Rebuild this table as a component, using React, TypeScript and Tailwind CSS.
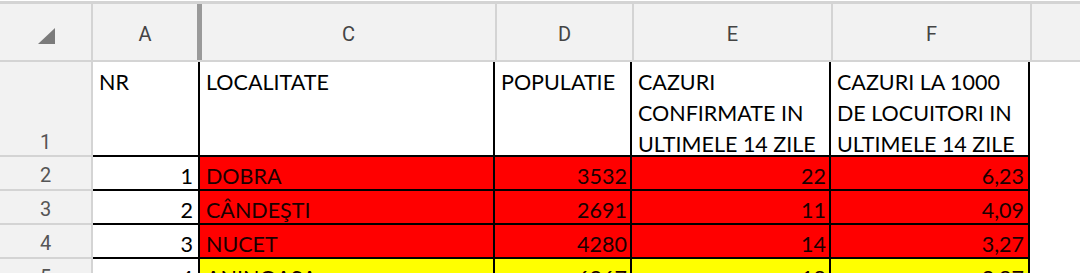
const cols = {
  a: "w-[107px]",
  c: "w-[295px]",
  d: "w-[137px]",
  e: "w-[199px]",
  f: "w-[199px]",
};

interface Row {
  n: number;
  nr: string;
  loc: string;
  pop: string;
  cases: string;
  rate: string;
  fill: string;
}

const rows: Row[] = [
  { n: 2, nr: "1", loc: "DOBRA", pop: "3532", cases: "22", rate: "6,23", fill: "bg-[#ff0000]" },
  { n: 3, nr: "2", loc: "CÂNDEŞTI", pop: "2691", cases: "11", rate: "4,09", fill: "bg-[#ff0000]" },
  { n: 4, nr: "3", loc: "NUCET", pop: "4280", cases: "14", rate: "3,27", fill: "bg-[#ff0000]" },
  { n: 5, nr: "4", loc: "ANINOASA", pop: "6267", cases: "18", rate: "2,87", fill: "bg-[#ffff00]" },
];

const hdrFont = "font-['Roboto',sans-serif] text-[20px] leading-[24px]";

function ColHead({ label, w, thick }: { label: string; w: string; thick?: boolean }) {
  return (
    <div
      className={`${w} shrink-0 flex items-center justify-center pt-[3px] text-[#444444] ${hdrFont} ${
        thick ? "border-r-[5px] border-[#9a9a9a]" : "border-r-2 border-[#d4d4d4]"
      }`}
    >
      {label}
    </div>
  );
}

function HeadCell({ w, lines }: { w: string; lines: string[] }) {
  return (
    <div className={`${w} shrink-0 overflow-hidden bg-white border-r-2 border-b-2 border-black pl-[6px] pt-[5px] leading-[31px]`}>
      {lines.map((l) => (
        <div key={l} className="whitespace-nowrap">
          {l}
        </div>
      ))}
    </div>
  );
}

export default function App() {
  return (
    <div className="w-[1080px] h-[273px] overflow-hidden bg-white font-['Lato',sans-serif] text-[21.5px] text-black">
      <div className="h-px bg-white" />
      {/* column letters */}
      <div className="flex h-[61px] bg-[#f2f2f2] border-t-[3px] border-b-2 border-[#d4d4d4]">
        <div className="w-[93px] shrink-0 border-r-2 border-[#d4d4d4] pl-[38px] pt-[24px]">
          <svg width="17" height="16" viewBox="0 0 17 16">
            <polygon points="17,0 17,16 0,16" fill="#7b7b7b" />
          </svg>
        </div>
        <ColHead label="A" w="w-[109px]" thick />
        <ColHead label="C" w="w-[295px]" />
        <ColHead label="D" w="w-[137px]" />
        <ColHead label="E" w="w-[199px]" />
        <ColHead label="F" w="w-[199px]" />
        <div className="flex-1" />
      </div>

      {/* row 1 */}
      <div className="flex h-[95px]">
        <div
          className={`w-[93px] shrink-0 bg-[#f2f2f2] border-r-2 border-b-2 border-[#d4d4d4] flex items-end justify-center pb-[1px] text-[#555555] ${hdrFont}`}
        >
          1
        </div>
        <HeadCell w={cols.a} lines={["NR"]} />
        <HeadCell w={cols.c} lines={["LOCALITATE"]} />
        <HeadCell w={cols.d} lines={["POPULATIE"]} />
        <HeadCell w={cols.e} lines={["CAZURI", "CONFIRMATE IN", "ULTIMELE 14 ZILE"]} />
        <HeadCell w={cols.f} lines={["CAZURI LA 1000", "DE LOCUITORI IN", "ULTIMELE 14 ZILE"]} />
        <div className="flex-1" />
      </div>

      {rows.map((r) => (
        <div key={r.n} className="flex h-[34px]">
          <div
            className={`w-[93px] shrink-0 bg-[#f2f2f2] border-r-2 border-b-2 border-[#d4d4d4] flex items-end justify-center pb-[2px] text-[#555555] ${hdrFont}`}
          >
            {r.n}
          </div>
          <div className={`${cols.a} shrink-0 bg-white border-r-2 border-b-2 border-black flex items-end justify-end pr-[5px] pb-[1px] leading-[24px]`}>
            {r.nr}
          </div>
          <div className={`${cols.c} shrink-0 ${r.fill} border-r-2 border-b-2 border-black flex items-end pl-[6px] pb-[1px] leading-[24px] text-[#1a0000]`}>
            {r.loc}
          </div>
          <div className={`${cols.d} shrink-0 ${r.fill} border-r-2 border-b-2 border-black flex items-end justify-end pr-[3px] pb-[1px] leading-[24px] text-[#1a0000]`}>
            {r.pop}
          </div>
          <div className={`${cols.e} shrink-0 ${r.fill} border-r-2 border-b-2 border-black flex items-end justify-end pr-[3px] pb-[1px] leading-[24px] text-[#1a0000]`}>
            {r.cases}
          </div>
          <div className={`${cols.f} shrink-0 ${r.fill} border-r-2 border-b-2 border-black flex items-end justify-end pr-[4px] pb-[1px] leading-[24px] text-[#1a0000]`}>
            {r.rate}
          </div>
          <div className="flex-1 bg-white" />
        </div>
      ))}
    </div>
  );
}
